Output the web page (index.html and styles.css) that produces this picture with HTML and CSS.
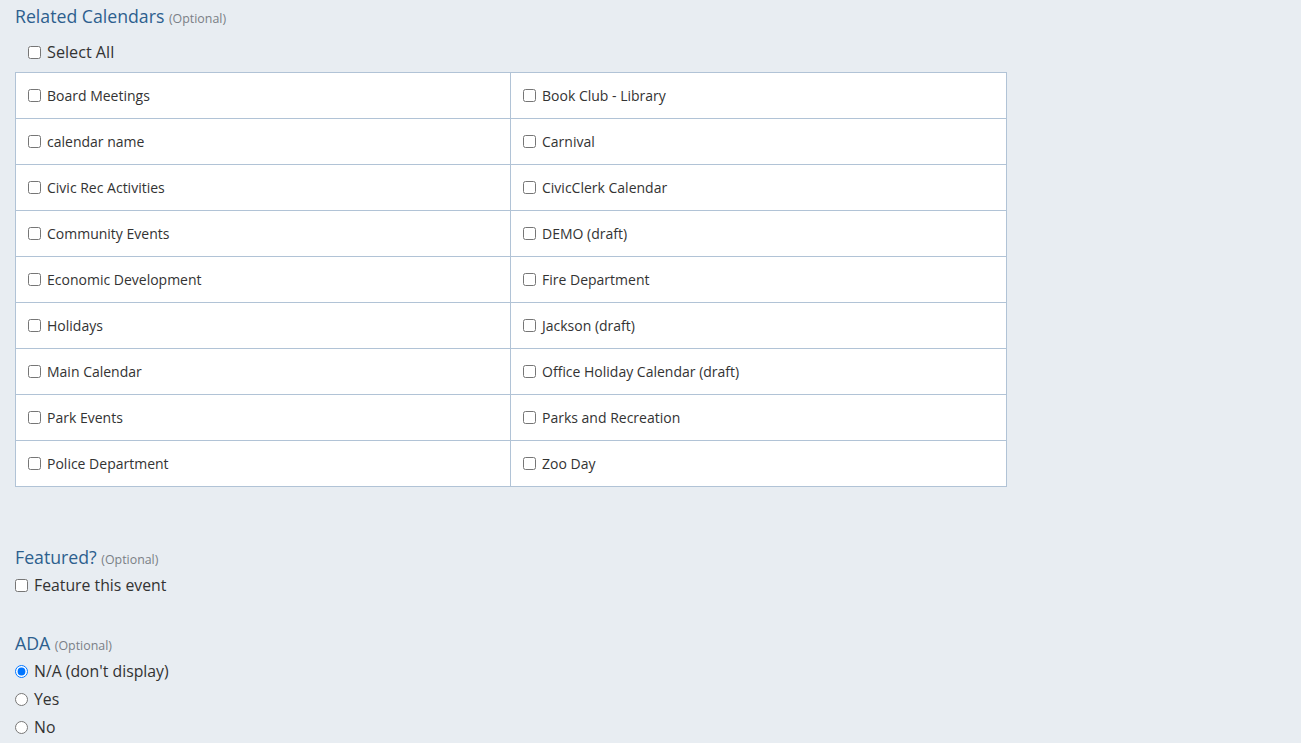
FILE: index.html
```html
<!DOCTYPE html>
<html>
<head>
<meta charset="utf-8">
<link rel="stylesheet" href="styles.css">
</head>
<body>
<div class="page">
  <section class="group">
    <h2 class="label">Related Calendars <span class="opt">(Optional)</span></h2>
    <label class="select-all"><input type="checkbox"><span>Select All</span></label>
    <table class="cal-table">
      <tr><td><label><input type="checkbox"><span>Board Meetings</span></label></td><td><label><input type="checkbox"><span>Book Club - Library</span></label></td></tr>
      <tr><td><label><input type="checkbox"><span>calendar name</span></label></td><td><label><input type="checkbox"><span>Carnival</span></label></td></tr>
      <tr><td><label><input type="checkbox"><span>Civic Rec Activities</span></label></td><td><label><input type="checkbox"><span>CivicClerk Calendar</span></label></td></tr>
      <tr><td><label><input type="checkbox"><span>Community Events</span></label></td><td><label><input type="checkbox"><span>DEMO (draft)</span></label></td></tr>
      <tr><td><label><input type="checkbox"><span>Economic Development</span></label></td><td><label><input type="checkbox"><span>Fire Department</span></label></td></tr>
      <tr><td><label><input type="checkbox"><span>Holidays</span></label></td><td><label><input type="checkbox"><span>Jackson (draft)</span></label></td></tr>
      <tr><td><label><input type="checkbox"><span>Main Calendar</span></label></td><td><label><input type="checkbox"><span>Office Holiday Calendar (draft)</span></label></td></tr>
      <tr><td><label><input type="checkbox"><span>Park Events</span></label></td><td><label><input type="checkbox"><span>Parks and Recreation</span></label></td></tr>
      <tr><td><label><input type="checkbox"><span>Police Department</span></label></td><td><label><input type="checkbox"><span>Zoo Day</span></label></td></tr>
    </table>
  </section>

  <section class="group featured">
    <h2 class="label field-label">Featured? <span class="opt">(Optional)</span></h2>
    <label class="opt-row"><input type="checkbox"><span>Feature this event</span></label>
  </section>

  <section class="group ada">
    <h2 class="label field-label">ADA <span class="opt">(Optional)</span></h2>
    <label class="opt-row"><input type="radio" name="ada" checked><span>N/A (don't display)</span></label>
    <label class="opt-row"><input type="radio" name="ada"><span>Yes</span></label>
    <label class="opt-row"><input type="radio" name="ada"><span>No</span></label>
  </section>
</div>
</body>
</html>
```

FILE: styles.css
```css
html, body {
  margin: 0;
  padding: 0;
  background: #e8edf2;
}
body {
  font-family: "Open Sans", "Lato", sans-serif;
  color: #333333;
  font-size: 14px;
}
.page {
  padding: 4px 15px 0 15px;
}
.group {
  display: flex;
  flex-direction: column;
  align-items: flex-start;
}
.label {
  margin: 0;
  height: 24px;
  font-size: 17.7px;
  font-weight: 400;
  line-height: 24px;
  color: #2d5f8e;
}
.field-label {
  margin-bottom: 2px;
}
.opt {
  font-size: 12.4px;
  line-height: 1;
  color: #7a7f86;
}
.select-all {
  display: flex;
  align-items: center;
  height: 28px;
  margin: 10px 0 6px 13px;
  font-size: 16.2px;
}
input[type="checkbox"], input[type="radio"] {
  width: 13px;
  height: 13px;
  margin: 0 6px 0 0;
  flex: none;
}
.cal-table {
  border-collapse: collapse;
  width: 992px;
  background: #ffffff;
  table-layout: fixed;
}
.cal-table td {
  border: 1px solid #b1c3d6;
  height: 46px;
  padding: 0 0 1px 12px;
  box-sizing: border-box;
}
.cal-table tr td:first-child {
  width: 495px;
}
.cal-table label {
  display: flex;
  align-items: center;
}
.featured {
  margin-top: 58px;
}
.ada {
  margin-top: 32px;
}
.opt-row {
  display: flex;
  align-items: center;
  height: 28px;
  font-size: 15.8px;
}
```
